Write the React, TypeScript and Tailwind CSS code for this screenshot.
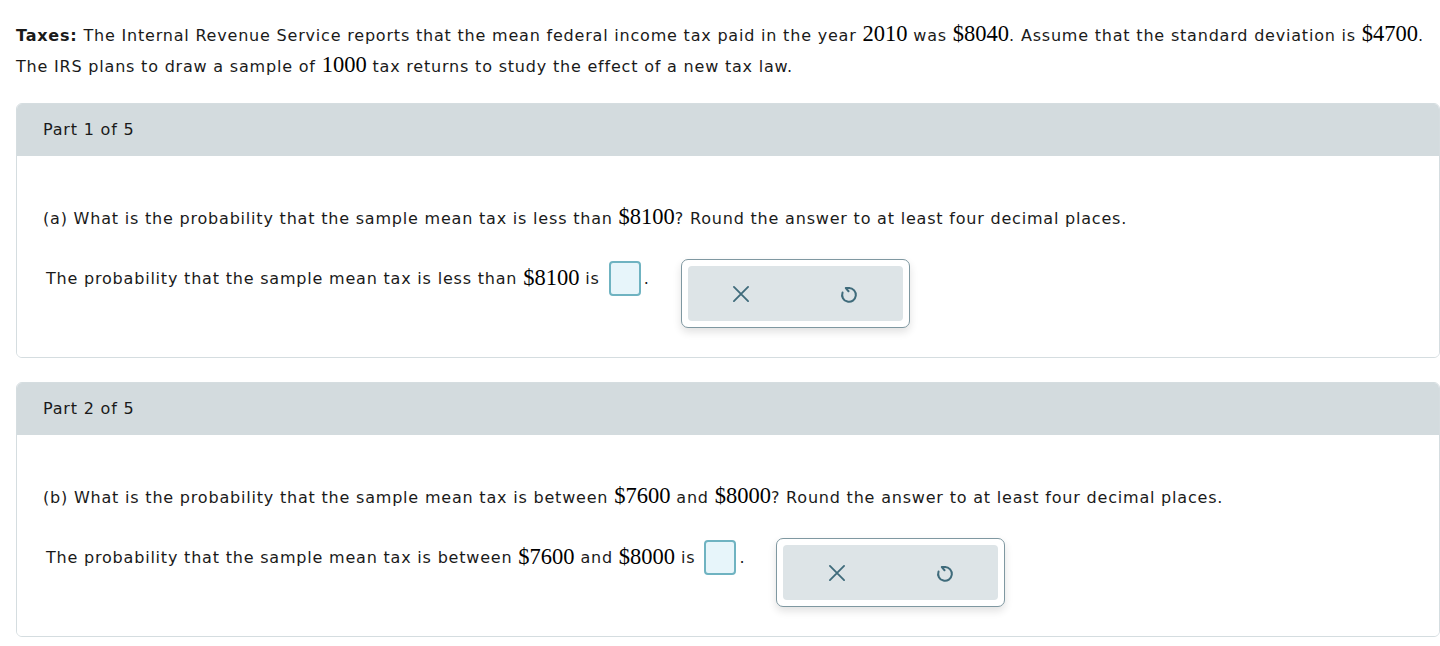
import React from "react";

const sans = { fontFamily: '"DejaVu Sans", Verdana, sans-serif' };

function M({ children }: { children: React.ReactNode }) {
  return (
    <span className="text-[22.5px] leading-[1] tracking-normal text-black" style={{ fontFamily: '"Liberation Serif", "Times New Roman", serif' }}>
      {children}
    </span>
  );
}

function XIcon() {
  return (
    <svg width="20" height="20" viewBox="0 0 24 24" fill="none" stroke="#3f6b7b" strokeWidth="2.2" strokeLinecap="round">
      <path d="M3.5 3.5 L20.5 20.5 M20.5 3.5 L3.5 20.5" />
    </svg>
  );
}

function UndoIcon() {
  return (
    <svg width="22" height="22" viewBox="0 0 24 24" fill="none" stroke="#3f6b7b" strokeWidth="2.2" strokeLinecap="round" strokeLinejoin="round">
      <path d="M12 5.5 A7.5 7.5 0 1 1 4.95 10.4" />
      <path d="M12 5.5 H8.5 L11.5 9" />
    </svg>
  );
}

function Tools() {
  return (
    <div className="ml-[31px] rounded-[7px] border border-[#7f98a1] bg-white p-[6px] shadow-[0_4px_8px_rgba(0,0,0,0.12)]">
      <div className="flex h-[55px] w-[215px] items-center rounded-[4px] bg-[#dde4e7]">
        <div className="flex w-1/2 justify-center">
          <XIcon />
        </div>
        <div className="flex w-1/2 justify-center">
          <UndoIcon />
        </div>
      </div>
    </div>
  );
}

function AnswerBox() {
  return <span className="inline-block h-[35px] w-[32px] rounded-[4px] border-2 border-[#6fb3c1] bg-[#e7f5fa] align-middle" />;
}

function Part({
  n,
  question,
  answer,
}: {
  n: number;
  question: React.ReactNode;
  answer: React.ReactNode;
}) {
  return (
    <div className="ml-4 overflow-hidden rounded-[6px] border border-[#d5dde0]">
      <div className="flex h-[52px] items-center bg-[#d3dbde] pl-[26px] text-[16px] text-[#1a1a1a]">
        Part {n} of 5
      </div>
      <div className="bg-white pb-[29px] pl-[26px] pt-[49px]">
        <div className="text-[16px] leading-[28px] text-[#1a1a1a]">{question}</div>
        <div className="mt-[26px] flex items-start pl-[3px]">
          <div className="mt-[2px] flex h-[35px] items-center text-[16px] text-[#1a1a1a]">
            {answer}
            <span className="ml-[9px]">
              <AnswerBox />
            </span>
            <span className="ml-[3px]">.</span>
          </div>
          <Tools />
        </div>
      </div>
    </div>
  );
}

export default function App() {
  return (
    <div className="min-h-[646px] bg-white pb-4 tracking-[0.8px]" style={sans}>
      <div className="pl-4 pr-2 pt-[20px] text-[16px] leading-[31px] text-[#1a1a1a]">
        <span className="font-bold">Taxes:</span> The Internal Revenue Service reports that the mean federal income tax paid in the year{" "}
        <M>2010</M> was <M>$8040</M>. Assume that the standard deviation is <M>$4700</M>. The IRS plans to draw a sample of{" "}
        <M>1000</M> tax returns to study the effect of a new tax law.
      </div>
      <div className="mt-[21px] flex flex-col gap-[24px]">
        <Part
          n={1}
          question={
            <>
              (a) What is the probability that the sample mean tax is less than <M>$8100</M>? Round the answer to at least four decimal places.
            </>
          }
          answer={
            <>
              The probability that the sample mean tax is less than&nbsp;<M>$8100</M>&nbsp;is
            </>
          }
        />
        <Part
          n={2}
          question={
            <>
              (b) What is the probability that the sample mean tax is between <M>$7600</M> and <M>$8000</M>? Round the answer to at least four decimal places.
            </>
          }
          answer={
            <>
              The probability that the sample mean tax is between&nbsp;<M>$7600</M>&nbsp;and&nbsp;<M>$8000</M>&nbsp;is
            </>
          }
        />
      </div>
    </div>
  );
}
